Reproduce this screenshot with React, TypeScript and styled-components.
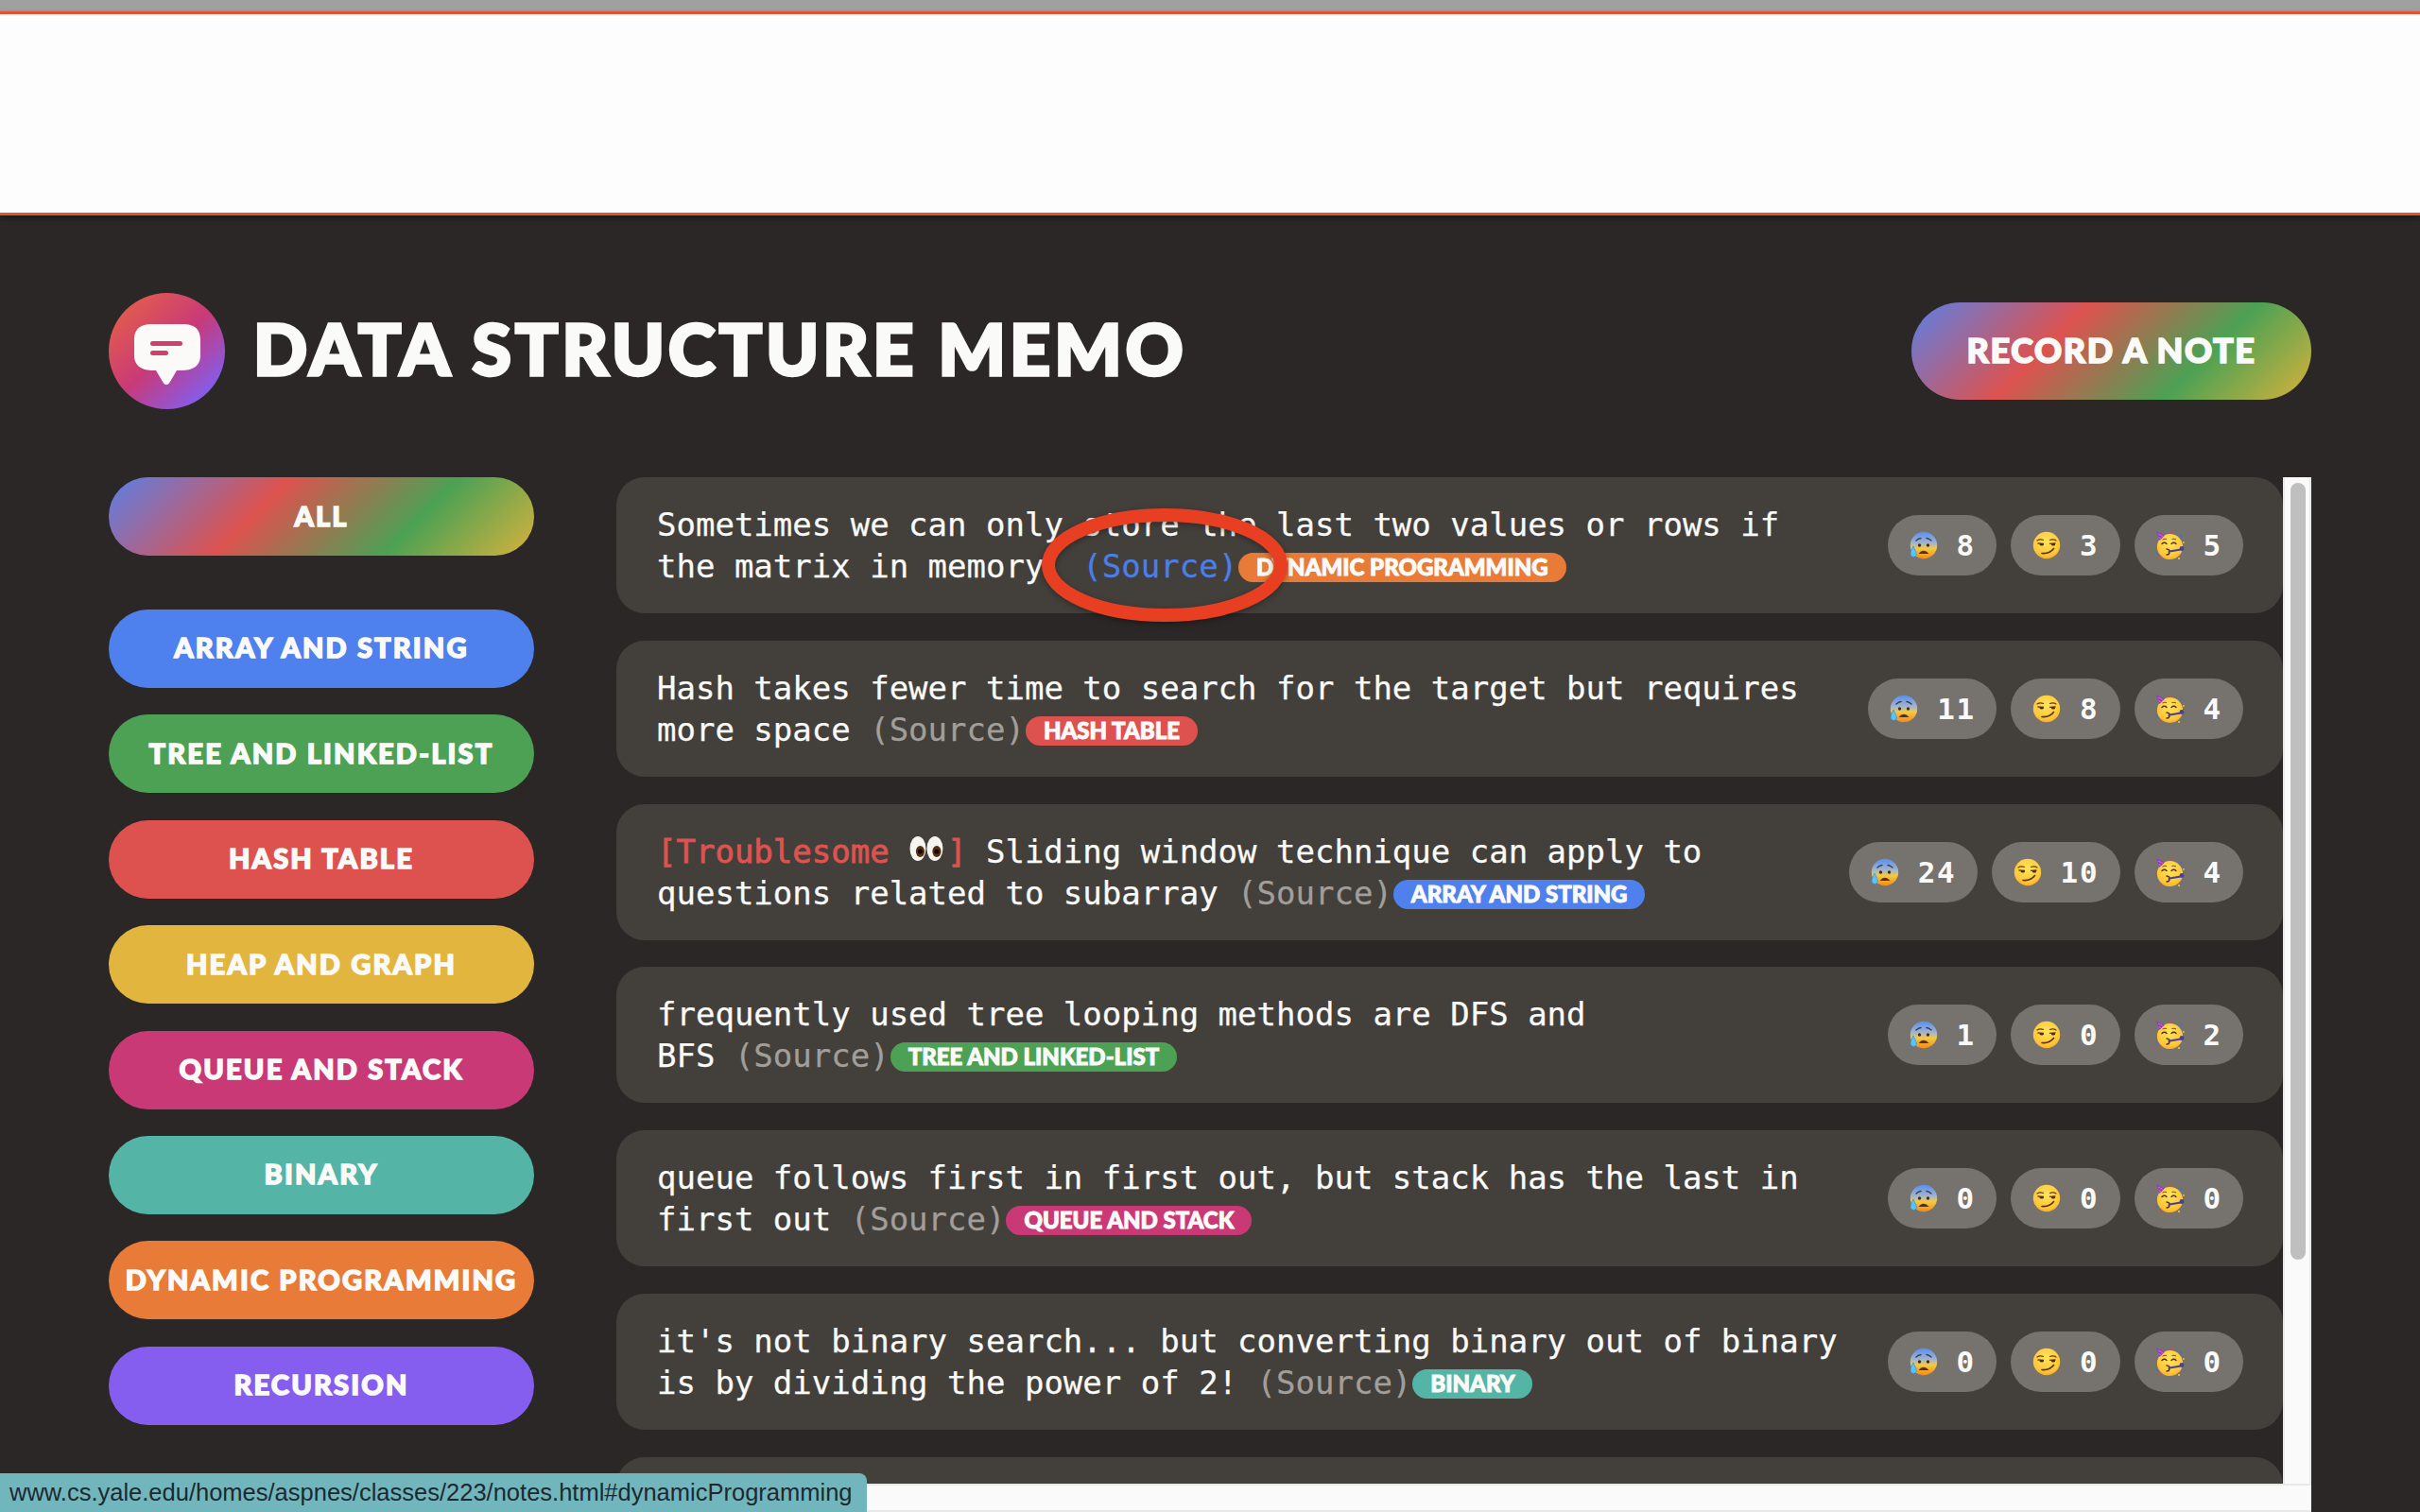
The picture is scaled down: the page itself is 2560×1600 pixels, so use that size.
import React from "react";
import styled, { createGlobalStyle } from "styled-components";

const GlobalStyle = createGlobalStyle`
html, body {
    margin: 0;
    padding: 0;
    background-color: #2a2726;
}
* {
    box-sizing: border-box;
}
`;

const DISPLAY = `"Lato", "Noto Sans", sans-serif`;
const MONO = `"DejaVu Sans Mono", "Liberation Mono", monospace`;
const RAINBOW = "linear-gradient(135deg, #5a80e8 0%, #dd524f 36%, #4ca154 70%, #d8b23c 100%)";

const colors: Record<string, string> = {
    "ARRAY AND STRING": "#4e80ee",
    "TREE AND LINKED-LIST": "#4ca154",
    "HASH TABLE": "#dd524f",
    "HEAP AND GRAPH": "#e2b53e",
    "QUEUE AND STACK": "#c83975",
    "BINARY": "#54b4a5",
    "DYNAMIC PROGRAMMING": "#e87b37",
    "RECURSION": "#855ef0",
};

const Page = styled.div`
position: relative;
width: 2560px;
height: 1600px;
overflow: hidden;
background-color: #2a2726;
`;

const BrowserStrip = styled.div`
height: 12px;
background-color: #a0a0a0;
`;

const Blank = styled.div`
height: 216px;
background-color: #fdfdfd;
border-top: 3px solid #e8502f;
border-bottom: 3px solid #e8502f;
box-shadow: 0 3px 6px rgba(0, 0, 0, 0.35);
`;

const Main = styled.main`
padding: 82px 115px 0;
`;

const Header = styled.header`
display: flex;
justify-content: space-between;
align-items: center;
height: 123px;
margin-bottom: 72px;
`;

const Brand = styled.div`
display: flex;
align-items: center;
gap: 30px;
`;

const Title = styled.h1`
margin: 0 0 6px;
font-family: ${DISPLAY};
font-size: 75px;
font-weight: 900;
letter-spacing: 4.2px;
line-height: 1;
color: #fafaf8;
-webkit-text-stroke: 3.5px #fafaf8;
white-space: nowrap;
`;

const RecordButton = styled.button`
width: 423px;
height: 103px;
border: none;
border-radius: 52px;
background: ${RAINBOW};
color: #fafaf8;
font-family: ${DISPLAY};
font-size: 36px;
font-weight: 900;
letter-spacing: 1.6px;
-webkit-text-stroke: 1.6px #fafaf8;
padding: 0 0 3px;
`;

const Content = styled.div`
display: flex;
gap: 87px;
height: 1095px;
`;

const Sidebar = styled.nav`
display: flex;
flex-direction: column;
gap: 28.4px;
flex: 0 0 450px;
`;

const FilterPill = styled.button<{ $bg: string; $all?: boolean }>`
height: 83px;
flex: 0 0 83px;
border: none;
border-radius: 42px;
padding: 0 0 3px;
background: ${(p) => p.$bg};
color: #fafaf8;
font-family: ${DISPLAY};
font-size: 29px;
font-weight: 900;
letter-spacing: 2.2px;
-webkit-text-stroke: 1.5px #fafaf8;
white-space: nowrap;
margin-bottom: ${(p) => (p.$all ? "28.6px" : "0")};
`;

const NotePanel = styled.section`
flex: 1;
display: flex;
flex-direction: column;
min-width: 0;
`;

const PanelRow = styled.div`
flex: 1;
display: flex;
min-height: 0;
`;

const NoteList = styled.div`
flex: 1;
overflow: hidden;
`;

const VerticalTrack = styled.div`
flex: 0 0 30px;
padding: 6px 4px 0 6px;
background-color: #fafafa;
border-left: 2px solid #e8e8e8;
border-right: 2px solid #e8e8e8;
`;

const VerticalThumb = styled.div`
height: 822px;
border-radius: 8px;
background-color: #bfbfbf;
`;

const HorizontalTrack = styled.div`
flex: 0 0 30px;
background-color: #fafafa;
border-top: 2px solid #e8e8e8;
border-bottom: 2px solid #e8e8e8;
`;

const Card = styled.article`
display: flex;
justify-content: space-between;
align-items: center;
height: 144px;
margin-bottom: 28.8px;
padding: 0 42px 0 43px;
border-radius: 30px;
background-color: #43403c;
`;

const NoteText = styled.p`
margin: 0;
font-family: ${MONO};
font-size: 34px;
line-height: 44px;
color: #fafaf8;
-webkit-text-stroke: 0.25px currentColor;
white-space: nowrap;
`;

const Flag = styled.span`
color: #dc5350;
-webkit-text-stroke: 0.8px currentColor;
`;

const SourceLink = styled.a<{ $hovered?: boolean }>`
color: ${(p) => (p.$hovered ? "#4a7fea" : "#a29e99")};
text-decoration: none;
`;

const Chip = styled.span<{ $bg: string }>`
display: inline-block;
height: 31px;
line-height: 30px;
margin-left: 1px;
padding: 0 19px;
border-radius: 16px;
vertical-align: 2px;
background-color: ${(p) => p.$bg};
color: #fafaf8;
font-family: ${DISPLAY};
font-size: 24px;
font-weight: 900;
-webkit-text-stroke: 1px #fafaf8;
`;

const Reactions = styled.div`
display: flex;
gap: 15px;
flex-shrink: 0;
`;

const ReactionPill = styled.button`
display: flex;
align-items: center;
gap: 20px;
height: 64px;
padding: 0 22px 0 23px;
border: none;
border-radius: 32px;
background-color: #76726e;
color: #fafaf8;
font-family: ${MONO};
font-size: 31px;
font-weight: 700;
letter-spacing: 1.8px;
`;

const StatusBar = styled.div`
position: absolute;
left: 0;
bottom: 0;
width: 917px;
height: 41px;
padding: 0 0 0 10px;
border-top-right-radius: 8px;
background-color: #72b6bd;
color: #1b2a30;
font-family: "Liberation Sans", sans-serif;
font-size: 25.5px;
line-height: 41px;
white-space: nowrap;
overflow: hidden;
`;

const Annotation = styled.svg`
position: absolute;
left: 1092px;
top: 528px;
filter: drop-shadow(0 2px 3px rgba(0, 0, 0, 0.35));
`;

const EyesBox = styled.svg`
display: inline-block;
width: 40.9px;
height: 30px;
vertical-align: -1px;
`;

const LogoMark = () => (
    <svg width="123" height="123" viewBox="0 0 123 123">
        <defs>
            <linearGradient id="logoFill" x1="0.12" y1="0.1" x2="0.88" y2="0.9">
                <stop offset="0" stopColor="#e35c4c" />
                <stop offset="0.5" stopColor="#c83a78" />
                <stop offset="1" stopColor="#7f5ff5" />
            </linearGradient>
        </defs>
        <circle cx="61.5" cy="61.5" r="61.5" fill="url(#logoFill)" />
        <path
            d="M47 33 C37 33 27 35 27 50 L27 66 C27 78 36 82 47 82 L50 82 L58 95.5 Q61 98.5 64 95.5 L72 82 L77 82 C88 82 97 78 97 66 L97 50 C97 35 87 33 77 33 Z"
            fill="#fbfaf8"
        />
        <rect x="44" y="51" width="34" height="5" rx="2.5" fill="#cf3f6f" />
        <rect x="44" y="61" width="19" height="5" rx="2.5" fill="#cf3f6f" />
    </svg>
);

const FaceDefs = () => (
    <defs>
        <radialGradient id="faceFill" cx="0.5" cy="0.35" r="0.75">
            <stop offset="0" stopColor="#ffe45c" />
            <stop offset="0.7" stopColor="#fdc636" />
            <stop offset="1" stopColor="#f59a24" />
        </radialGradient>
        <linearGradient id="coldFill" x1="0" y1="0" x2="0" y2="1">
            <stop offset="0" stopColor="#5a8ef0" />
            <stop offset="0.45" stopColor="#a9b7c8" />
            <stop offset="0.62" stopColor="#f4ca3c" />
            <stop offset="1" stopColor="#f28a1e" />
        </linearGradient>
    </defs>
);

const AnxiousFace = () => (
    <svg width="30" height="30" viewBox="0 0 30 30">
        <FaceDefs />
        <circle cx="15" cy="15" r="14.2" fill="url(#coldFill)" />
        <path d="M7 10 Q10 7.5 12 7.5 M23 10 Q20 7.5 18 7.5" stroke="#2c3a55" strokeWidth="1.3" fill="none" strokeLinecap="round" />
        <circle cx="10.5" cy="15" r="1.7" fill="#4a2a14" />
        <circle cx="19.5" cy="15" r="1.7" fill="#4a2a14" />
        <path d="M9.5 24 Q15 17.5 20.5 24 Z" fill="#5a2e14" />
        <path d="M4 16 Q0.5 22 1 25 A3.4 3.4 0 0 0 7.5 25 Q7.5 22 4 16 Z" fill="#5cc3f5" stroke="#2f86d8" strokeWidth="0.6" />
    </svg>
);

const SmirkFace = () => (
    <svg width="30" height="30" viewBox="0 0 30 30">
        <FaceDefs />
        <circle cx="15" cy="15" r="14.2" fill="url(#faceFill)" />
        <path d="M5 10 Q8 8 11.5 9.5 M18.5 9.5 Q22 8 25 10" stroke="#6b3a14" strokeWidth="1.2" fill="none" strokeLinecap="round" />
        <path d="M5.5 13 L12 13.4 M18 13.4 L24.5 13" stroke="#6b3a14" strokeWidth="1.3" fill="none" />
        <ellipse cx="9.8" cy="14.2" rx="2" ry="1.3" fill="#4a2a14" />
        <ellipse cx="22" cy="14.2" rx="2" ry="1.3" fill="#4a2a14" />
        <path d="M10 23.5 Q18 24.5 22.5 18.5" stroke="#5a2e14" strokeWidth="1.6" fill="none" strokeLinecap="round" />
    </svg>
);

const PartyFace = () => (
    <svg width="30" height="32" viewBox="0 0 30 32">
        <FaceDefs />
        <circle cx="14.5" cy="17.5" r="13.6" fill="url(#faceFill)" />
        <path d="M0 1 L9 5.5 L3.5 11 Z" fill="#8a3fd0" />
        <path d="M2 4 L7 6.5 M2.5 7.5 L5 9" stroke="#e85aa8" strokeWidth="1.1" />
        <path d="M6 14.5 Q8.5 12 11 14.5 M16 14.5 Q18.5 12 21 14.5" stroke="#5a2e14" strokeWidth="1.4" fill="none" strokeLinecap="round" />
        <path d="M6.5 10 Q9 8.7 11 9.5 M16.5 9.5 Q19 8.7 21 10" stroke="#7a4a18" strokeWidth="1" fill="none" />
        <path d="M11 20 Q14 20.5 14 22 Q12.5 22.8 14 24 Q13.5 26 11 26" stroke="#5a2e14" strokeWidth="1.4" fill="none" strokeLinecap="round" />
        <path d="M14 22.5 L26 20.5" stroke="#47409e" strokeWidth="2.2" strokeLinecap="round" />
        <circle cx="27" cy="19.5" r="2.4" fill="#47409e" />
        <circle cx="15" cy="2.5" r="1.2" fill="#e2483f" />
        <rect x="25" y="5" width="2.2" height="2.2" fill="#3f6fd8" />
        <rect x="28" y="12" width="1.8" height="1.8" fill="#e8b52c" />
        <rect x="0" y="24" width="1.8" height="1.8" fill="#3f6fd8" />
        <rect x="2" y="29" width="2" height="2" fill="#e2483f" />
        <rect x="23" y="29" width="2" height="2" fill="#e8b52c" />
    </svg>
);

const Eyes = () => (
    <EyesBox viewBox="0 0 41 30">
        <ellipse cx="10" cy="14" rx="8.5" ry="13" fill="#f6f4ef" stroke="none" />
        <ellipse cx="12.5" cy="17" rx="4.6" ry="6" fill="#5a2f10" />
        <circle cx="12.5" cy="17" r="2.6" fill="#120a06" />
        <ellipse cx="28" cy="14" rx="8.5" ry="13" fill="#f6f4ef" stroke="none" />
        <ellipse cx="30" cy="17" rx="4.6" ry="6" fill="#5a2f10" />
        <circle cx="30" cy="17" r="2.6" fill="#120a06" />
    </EyesBox>
);

interface Note {
    flagged?: boolean;
    first: string;
    second: string;
    chip: string;
    hovered?: boolean;
    counts: [number, number, number];
}

const notes: Note[] = [
    { first: "Sometimes we can only store the last two values or rows if", second: "the matrix in memory. ", chip: "DYNAMIC PROGRAMMING", hovered: true, counts: [8, 3, 5] },
    { first: "Hash takes fewer time to search for the target but requires", second: "more space ", chip: "HASH TABLE", counts: [11, 8, 4] },
    { flagged: true, first: " Sliding window technique can apply to", second: "questions related to subarray ", chip: "ARRAY AND STRING", counts: [24, 10, 4] },
    { first: "frequently used tree looping methods are DFS and", second: "BFS ", chip: "TREE AND LINKED-LIST", counts: [1, 0, 2] },
    { first: "queue follows first in first out, but stack has the last in", second: "first out ", chip: "QUEUE AND STACK", counts: [0, 0, 0] },
    { first: "it's not binary search... but converting binary out of binary", second: "is by dividing the power of 2! ", chip: "BINARY", counts: [0, 0, 0] },
];

const NoteCard: React.FC<{ note: Note }> = ({ note }) => (
    <Card>
        <NoteText>
            {note.flagged && (
                <Flag>
                    [Troublesome <Eyes />]
                </Flag>
            )}
            {note.first}
            <br />
            {note.second}
            <SourceLink $hovered={note.hovered}>(Source)</SourceLink>
            <Chip $bg={colors[note.chip]}>{note.chip}</Chip>
        </NoteText>
        <Reactions>
            <ReactionPill>
                <AnxiousFace />
                {note.counts[0]}
            </ReactionPill>
            <ReactionPill>
                <SmirkFace />
                {note.counts[1]}
            </ReactionPill>
            <ReactionPill>
                <PartyFace />
                {note.counts[2]}
            </ReactionPill>
        </Reactions>
    </Card>
);

const App: React.FC = () => {
    return (
        <Page>
            <GlobalStyle />
            <BrowserStrip />
            <Blank />
            <Main>
                <Header>
                    <Brand>
                        <LogoMark />
                        <Title>DATA STRUCTURE MEMO</Title>
                    </Brand>
                    <RecordButton>RECORD A NOTE</RecordButton>
                </Header>
                <Content>
                    <Sidebar>
                        <FilterPill $bg={RAINBOW} $all>
                            ALL
                        </FilterPill>
                        {Object.keys(colors).map((name) => (
                            <FilterPill key={name} $bg={colors[name]}>
                                {name}
                            </FilterPill>
                        ))}
                    </Sidebar>
                    <NotePanel>
                        <PanelRow>
                            <NoteList>
                                {notes.map((note, index) => (
                                    <NoteCard key={index} note={note} />
                                ))}
                                <Card />
                            </NoteList>
                            <VerticalTrack>
                                <VerticalThumb />
                            </VerticalTrack>
                        </PanelRow>
                        <HorizontalTrack />
                    </NotePanel>
                </Content>
            </Main>
            <Annotation width="280" height="140" viewBox="0 0 280 140">
                <ellipse cx="140" cy="70" rx="123" ry="53" fill="none" stroke="#e83f22" strokeWidth="14" />
            </Annotation>
            <StatusBar>www.cs.yale.edu/homes/aspnes/classes/223/notes.html#dynamicProgramming</StatusBar>
        </Page>
    );
};

export default App;
